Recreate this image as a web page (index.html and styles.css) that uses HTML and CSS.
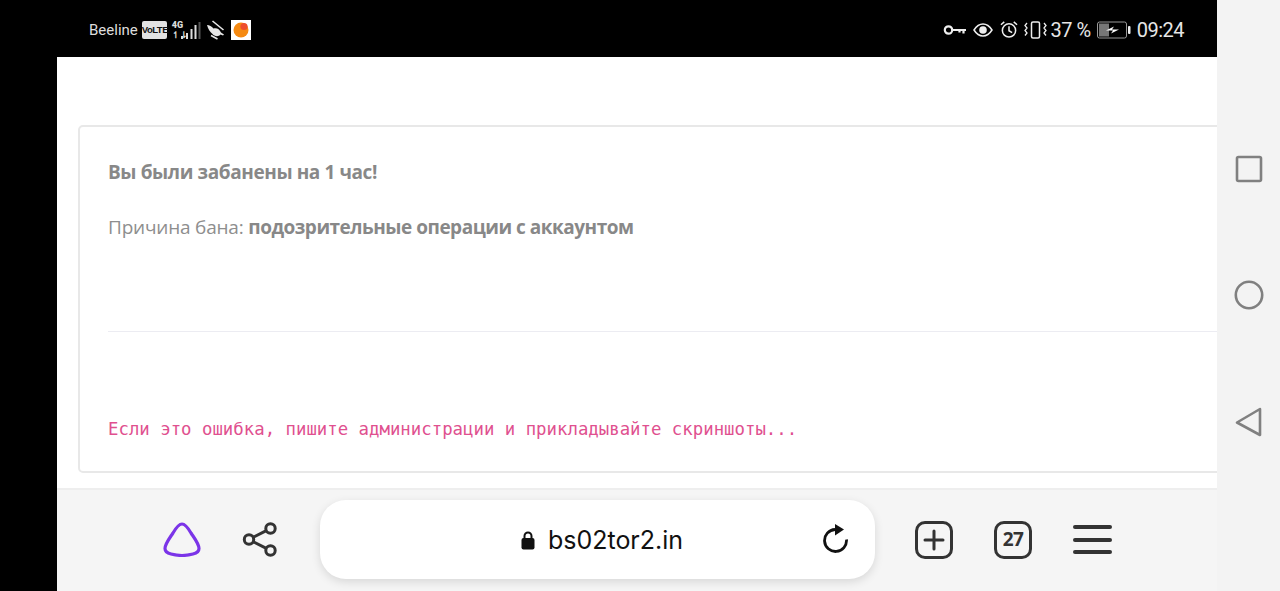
FILE: index.html
```html
<!DOCTYPE html>
<html lang="ru">
<head>
<meta charset="utf-8">
<title>bs02tor2.in</title>
<link rel="stylesheet" href="styles.css">
</head>
<body>
<div class="screen">
  <div class="cutout"></div>
  <div class="center">
    <header class="status">
      <div class="status-left">
        <span class="carrier">Beeline</span>
        <span class="volte">VoLTE</span>
        <span class="net"><span class="net-label"><b>4G</b><b>↿⇂</b></span>
          <svg class="bars" width="22" height="19" viewBox="0 0 22 19"><g fill="#ddd"><rect x="2" y="15" width="2" height="3"/><rect x="7" y="12" width="2" height="6"/><rect x="11.500" y="8" width="2" height="10"/><rect x="15.500" y="4" width="2" height="14"/></g><rect x="19.500" y="1" width="2" height="17" fill="#555"/></svg>
        </span>
        <svg class="bird" width="20" height="20" viewBox="0 0 20 20"><path d="M1 5c2.500 0 4.500 1.500 6.500 3.500 3-1 6 .5 7.500 4l3 2-1 1-2.500-1c-2 2.500-6 2-8-.5C4 12 2 9 1 5z" fill="#e6e6e6"/><path d="M6.500 1l11 9M5 15.500l6.500 3.500" stroke="#e6e6e6" stroke-width="1.600" fill="none"/></svg>
        <svg class="appicon" width="20" height="20" viewBox="0 0 20 20"><rect width="20" height="20" fill="#fff"/><circle cx="10" cy="10" r="7.500" fill="#f58a12"/><circle cx="13" cy="6.500" r="3.600" fill="#ee4d2d"/></svg>
      </div>
      <div class="status-right">
        <svg width="23" height="14" viewBox="0 0 23 14"><circle cx="5.500" cy="7" r="3.700" fill="none" stroke="#eee" stroke-width="2.200"/><path d="M9 7h14M20.500 7v3.500M16.500 7v2.500" stroke="#eee" stroke-width="2.200" fill="none"/></svg>
        <svg class="gap-eye" width="20" height="16" viewBox="0 0 20 16"><path d="M1 8c2.500-4 5.500-6 9-6s6.500 2 9 6c-2.500 4-5.500 6-9 6s-6.500-2-9-6z" fill="none" stroke="#eee" stroke-width="1.500"/><circle cx="10" cy="8" r="3.800" fill="#eee"/></svg>
        <svg class="gap-alarm" width="18" height="19" viewBox="0 0 19 19"><circle cx="9.500" cy="10.500" r="7" fill="none" stroke="#eee" stroke-width="1.600"/><path d="M9.500 6v4.800l3.300 2M1 4.500L4.500 1.500M18 4.500L14.500 1.500" fill="none" stroke="#eee" stroke-width="1.600"/></svg>
        <svg class="gap-vib" width="23" height="18" viewBox="0 0 23 18"><rect x="7.500" y="1" width="8" height="16" rx="1.500" fill="none" stroke="#eee" stroke-width="1.500"/><path d="M3 2l-2 2.500 2 2.500-2 2.500 2 2.500-2 2.500M20 2l2 2.500-2 2.500 2 2.500-2 2.500 2 2.500" fill="none" stroke="#eee" stroke-width="1.300"/></svg>
        <span class="percent">37 %</span>
        <svg class="gap-batt" width="34" height="18" viewBox="0 0 34 18"><rect x=".5" y="1" width="29" height="16" rx="2" fill="none" stroke="#999"/><rect x="2" y="2.500" width="10" height="13" fill="#777"/><path d="M9 9.500l8-4-2 3h7l-8 4 2-3z" fill="#fff"/><rect x="31" y="5" width="2.500" height="8" rx="1" fill="#eee"/></svg>
        <span class="clock">09:24</span>
      </div>
    </header>
    <main class="content">
      <section class="card">
        <p class="title">Вы были забанены на 1 час!</p>
        <p class="reason">Причина бана: <b>подозрительные операции с аккаунтом</b></p>
        <hr class="rule">
        <p class="note">Если это ошибка, пишите администрации и прикладывайте скриншоты...</p>
      </section>
    </main>
    <footer class="toolbar">
      <svg class="alice" width="38" height="35" viewBox="0 0 38 35"><path d="M19 2C22 2 24.500 5 28 11 32 17 36 22 36 26.500 36 29 34 31 30 32 26 33 23 33.500 19 33.500 15 33.500 12 33 8 32 4 31 2 29 2 26.500 2 22 6 17 10 11 13.500 5 16 2 19 2z" fill="none" stroke="#7b34e8" stroke-width="3.200"/></svg>
      <svg class="share" width="36" height="37" viewBox="0 0 36 37"><circle cx="28.500" cy="7.500" r="4.700" fill="none" stroke="#333" stroke-width="3"/><circle cx="7" cy="18.500" r="4.700" fill="none" stroke="#333" stroke-width="3"/><circle cx="28.500" cy="29.500" r="4.700" fill="none" stroke="#333" stroke-width="3"/><path d="M11.200 16.300L24.300 9.700M11.200 20.700L24.300 27.300" stroke="#333" stroke-width="3"/></svg>
      <div class="urlbar">
        <span class="url">
          <svg class="lock" width="14" height="19" viewBox="0 0 14 19"><rect x="0.500" y="7" width="13" height="11.500" rx="2" fill="#111"/><path d="M3.500 8V5a3.500 3.500 0 0 1 7 0v3" fill="none" stroke="#111" stroke-width="2"/></svg>
          bs02tor2.in
        </span>
        <svg class="reload" width="26" height="30" viewBox="0 0 26 30"><path d="M12 6.500A11 11 0 1 0 23.500 16.500" fill="none" stroke="#111" stroke-width="2.800"/><path d="M12 1l9 5.500-9 6z" fill="#111"/></svg>
      </div>
      <span class="tool-box plus"><svg width="22" height="22" viewBox="0 0 22 22"><path d="M11 2v18M2 11h18" stroke="#333" stroke-width="3" stroke-linecap="round"/></svg></span>
      <span class="tool-box tabs">27</span>
      <span class="menu"><i></i><i></i><i></i></span>
    </footer>
  </div>
  <nav class="navbar">
    <svg width="28" height="28" viewBox="0 0 28 28"><rect x="2" y="2" width="24" height="24" rx="1.500" fill="none" stroke="#808080" stroke-width="2.600"/></svg>
    <svg width="30" height="30" viewBox="0 0 30 30"><circle cx="15" cy="15" r="13.200" fill="none" stroke="#808080" stroke-width="2.600"/></svg>
    <svg width="27" height="30" viewBox="0 0 27 30"><path d="M25 2L2 15.500 25 28z" fill="none" stroke="#808080" stroke-width="2.600" stroke-linejoin="round"/></svg>
  </nav>
</div>
</body>
</html>
```
FILE: styles.css
```css
* { box-sizing: border-box; }
html, body { margin: 0; height: 100%; overflow: hidden; background: #000; }
.screen { display: flex; width: 1280px; height: 591px; }
.cutout { width: 57px; flex: none; background: #000; }
.center { width: 1160px; flex: none; display: flex; flex-direction: column; overflow: hidden; }
.status {
  height: 57px; flex: none; background: #000; color: #e6e6e6;
  display: flex; justify-content: space-between; align-items: center;
  padding: 2px 33px 0 32px; font-family: Roboto, sans-serif;
}
.status-left, .status-right { display: flex; align-items: center; }
.carrier { font-size: 15px; color: #ddd; }
.volte {
  margin-left: 4px; width: 25px; height: 18px; background: #e2e2e2; color: #111;
  border-radius: 2px; font-size: 9.500px; font-weight: 900; line-height: 18px; text-align: center;
  font-family: "Liberation Sans", sans-serif; letter-spacing: -.5px;
}
.net { margin-left: 5px; display: flex; align-items: flex-end; }
.net-label { display: flex; flex-direction: column; font: 700 9px/10px Roboto, sans-serif; color: #ddd; width: 7px; }
.net-label b { display: block; white-space: nowrap; }
.bird { margin-left: 5px; }
.appicon { margin-left: 5px; }
.gap-eye { margin-left: 7px; }
.gap-alarm { margin-left: 7px; }
.gap-vib { margin-left: 6px; }
.percent { font-size: 20px; margin-left: 4px; color: #e6e6e6; letter-spacing: -.5px; }
.gap-batt { margin-left: 6px; }
.clock { font-size: 20px; margin-left: 6px; color: #e6e6e6; letter-spacing: -.5px; }
.content { flex: 1; background: #fff; padding: 69px 0 15px 21px; display: flex; min-height: 0; }
.card {
  width: 1200px; flex: none; height: 348px; background: #fff; border: 2px solid #e8e8e8;
  border-radius: 5px; padding: 32px 28px 0 28px; margin-top: -1px;
}
.title { margin: 0; font: 700 19px/26px "Open Sans", sans-serif; color: #888; letter-spacing: -.4px; }
.reason { margin: 29px 0 0; font: 400 19px/26px "Open Sans", sans-serif; color: #8e8e8e; letter-spacing: -.2px; }
.reason b { font-weight: 700; color: #888; letter-spacing: -.49px; }
.rule { margin: 91px 0 0; border: 0; border-top: 1px solid #ececf2; }
.note { margin: 85px 0 0; font: 400 17.350px/24px "DejaVu Sans Mono", monospace; color: #e0508f; white-space: nowrap; }
.toolbar {
  height: 103px; flex: none; background: #f5f5f5; border-top: 2px solid #eeeeee;
  display: flex; align-items: center; padding: 0 0 2px 106px;
}
.share { margin-left: 41px; }
.urlbar {
  margin-left: 42px; width: 555px; height: 79px; background: #fff; border-radius: 26px;
  box-shadow: 0 3px 10px rgba(0,0,0,.12); position: relative;
  display: flex; align-items: center; justify-content: center; padding-left: 9px;
}
.url { display: flex; align-items: center; gap: 13px; font: 400 25px/30px Inter, sans-serif; color: #111; }
.lock { margin-top: 1px; }
.reload { position: absolute; left: 503px; top: 23px; }
.tool-box {
  width: 38px; height: 38px; border: 3.500px solid #333; border-radius: 10px;
  display: flex; align-items: center; justify-content: center;
  color: #333; font: 700 19px/1 "Open Sans", sans-serif; letter-spacing: -.5px;
}
.plus { margin-left: 40px; }
.tabs { margin-left: 41px; }
.menu { margin-left: 41px; width: 39px; height: 29px; display: flex; flex-direction: column; justify-content: space-between; }
.menu i { display: block; height: 4px; border-radius: 2px; background: #333; }
.navbar {
  flex: 1; background: #f3f3f3; display: flex; flex-direction: column; align-items: center;
  padding: 155px 0 0 0; gap: 97px;
}
```
